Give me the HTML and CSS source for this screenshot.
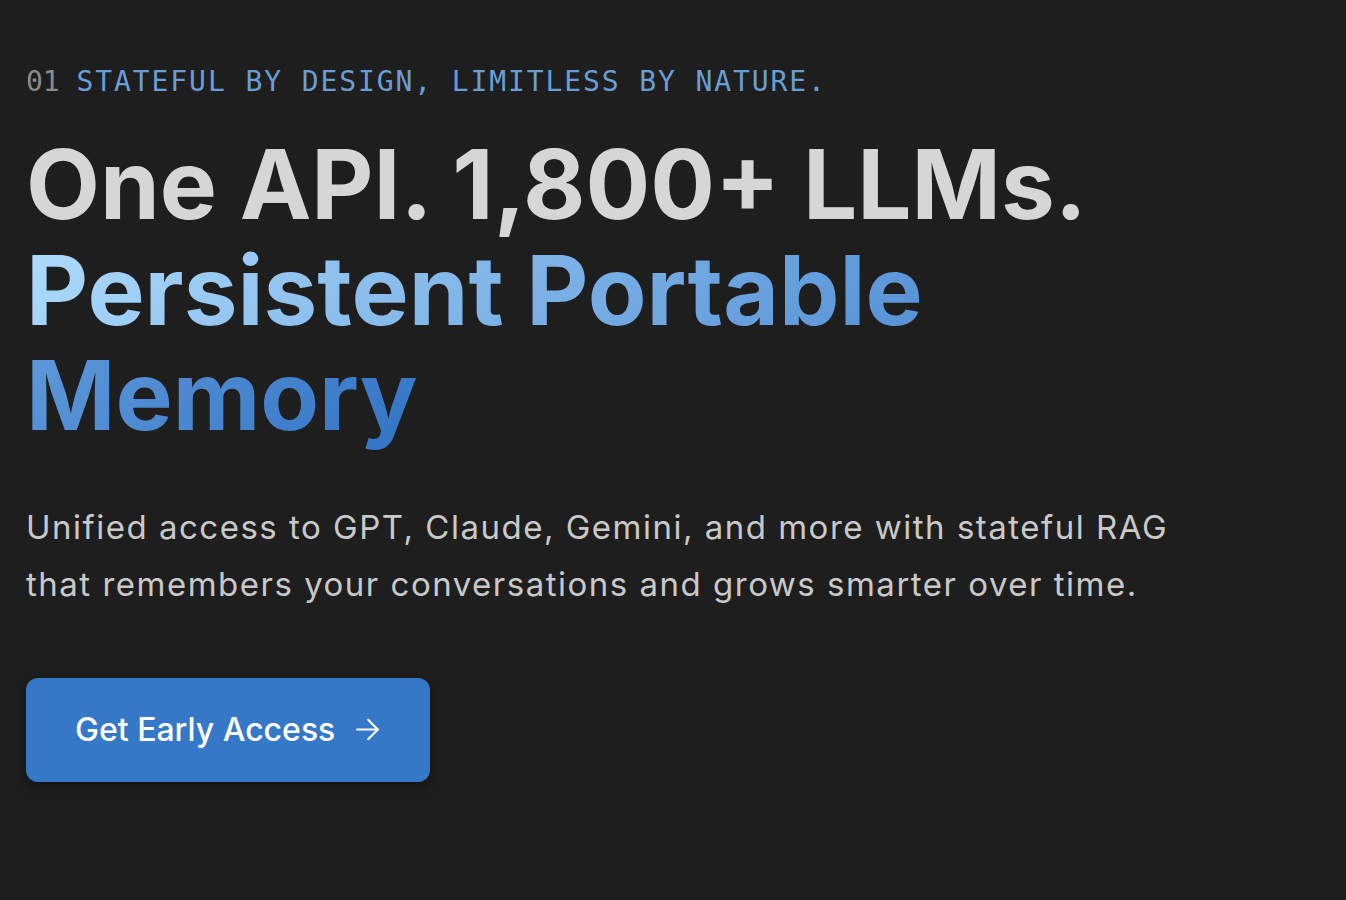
FILE: index.html
```html
<!DOCTYPE html>
<html lang="en">
<head>
<meta charset="utf-8">
<title>Persistent Portable Memory</title>
<link rel="stylesheet" href="styles.css">
</head>
<body>
<main class="hero">
  <p class="eyebrow"><span class="eyebrow-num">01</span> <span class="eyebrow-text">STATEFUL BY DESIGN, LIMITLESS BY NATURE.</span></p>
  <h1 class="title">One API. 1,800+ LLMs.<br><span class="title-grad">Persistent Portable Memory</span></h1>
  <p class="lead">Unified access to GPT, Claude, Gemini, and more with stateful RAG that remembers your conversations and grows smarter over time.</p>
  <a class="cta" href="#">Get Early Access
    <svg class="cta-icon" viewBox="0 0 24 24" width="31" height="31" fill="none" stroke="currentColor" stroke-width="1.6" stroke-linecap="round" stroke-linejoin="round"><path d="M4 12h16"/><path d="M12.5 4.5l7.5 7.5-7.5 7.5"/></svg>
  </a>
</main>
</body>
</html>
```
FILE: styles.css
```css
html, body {
  margin: 0;
  padding: 0;
  background: #1e1e1e;
}
body {
  font-family: Inter, "Noto Sans", sans-serif;
  min-height: 900px;
}
.hero {
  padding: 61px 26px 0 26px;
  display: flex;
  flex-direction: column;
  align-items: flex-start;
}
.eyebrow {
  margin: 0;
  font-family: "DejaVu Sans Mono", "Liberation Mono", monospace;
  font-size: 28px;
  line-height: 42px;
}
.eyebrow-num {
  color: #8a8a8a;
}
.eyebrow-text {
  color: #6a9fd6;
  letter-spacing: 1.9px;
}
.title {
  margin: 29px 0 0 0;
  font-size: 96px;
  line-height: 1.1;
  font-weight: 700;
  letter-spacing: 0;
  color: #d6d6d6;
  max-width: 1200px;
}
.title-grad {
  background: linear-gradient(135deg, #aedcfc 0%, #3273c6 100%);
  -webkit-background-clip: text;
  background-clip: text;
  color: transparent;
}
.lead {
  margin: 50px 0 0 0;
  font-size: 33px;
  line-height: 57px;
  letter-spacing: 1.5px;
  color: #c9c9c9;
  max-width: 1195px;
}
.cta {
  margin-top: 65px;
  display: inline-flex;
  align-items: center;
  gap: 17px;
  padding: 32px 47px 32px 49px;
  background: #3578c8;
  color: #ffffff;
  border-radius: 12px;
  font-size: 32px;
  line-height: 40px;
  font-weight: 500;
  text-decoration: none;
  box-shadow: 0 4px 12px rgba(0, 0, 0, 0.35);
}
.cta-icon {
  display: block;
}
```
